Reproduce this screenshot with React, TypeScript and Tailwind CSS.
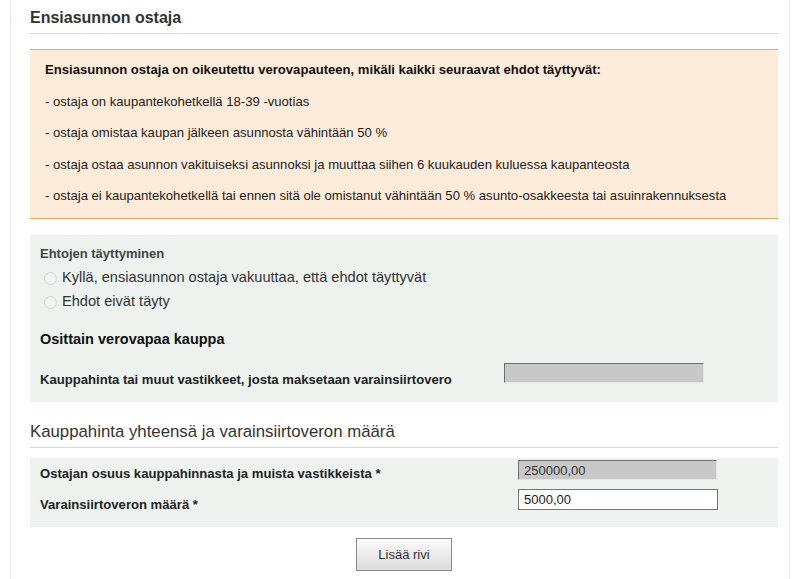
const conditions = [
  "- ostaja on kaupantekohetkellä 18-39 -vuotias",
  "- ostaja omistaa kaupan jälkeen asunnosta vähintään 50 %",
  "- ostaja ostaa asunnon vakituiseksi asunnoksi ja muuttaa siihen 6 kuukauden kuluessa kaupanteosta",
  "- ostaja ei kaupantekohetkellä tai ennen sitä ole omistanut vähintään 50 % asunto-osakkeesta tai asuinrakennuksesta",
];

function Radio({ label }: { label: string }) {
  return (
    <label className="flex items-center gap-[5px] pl-[4px] h-[24px] text-[14.6px] text-[#333]">
      <input
        type="radio"
        name="ehdot"
        disabled
        className="appearance-none w-[13px] h-[13px] rounded-full border border-[#d4d6d4] bg-[#f2f4f2]"
      />
      {label}
    </label>
  );
}

export default function App() {
  return (
    <div className="min-h-[579px] bg-white font-['Liberation_Sans',Arial,sans-serif]">
      <div className="ml-[10px] w-[780px] min-h-[579px] border-l border-r border-[#e3e3e3] pl-[19px] pr-[11px]">
        <h2 className="border-b border-[#d9d9d9] pt-[8px] pb-[5px] text-[16px] leading-[20px] font-bold text-[#333]">
          Ensiasunnon ostaja
        </h2>

        <div className="mt-[15px] border-t border-b border-[#e2a962] bg-[#fdebd9] pl-[15px] pt-[11px] pb-[13px] flex flex-col gap-[13.5px] text-[13.1px] leading-[18px] text-[#222]">
          <p className="font-bold text-[#111]">
            Ensiasunnon ostaja on oikeutettu verovapauteen, mikäli kaikki seuraavat ehdot täyttyvät:
          </p>
          {conditions.map((c) => (
            <p key={c}>{c}</p>
          ))}
        </div>

        <div className="mt-[16px] bg-[#edf2ee] px-[10px] pt-[10px] pb-[13px]">
          <p className="text-[13px] leading-[18px] font-bold text-[#444]">Ehtojen täyttyminen</p>
          <div className="mt-[3px]">
            <Radio label="Kyllä, ensiasunnon ostaja vakuuttaa, että ehdot täyttyvät" />
            <Radio label="Ehdot eivät täyty" />
          </div>
          <p className="mt-[15px] text-[14.5px] leading-[20px] font-bold text-[#111]">
            Osittain verovapaa kauppa
          </p>
          <div className="mt-[14px] flex items-start">
            <span className="w-[464px] pt-[8px] text-[13.1px] leading-[18px] font-bold text-[#222]">
              Kauppahinta tai muut vastikkeet, josta maksetaan varainsiirtovero
            </span>
            <input
              type="text"
              disabled
              className="w-[200px] h-[20px] bg-[#c8c8c8] border border-t-[#6e6e6e] border-l-[#6e6e6e] border-r-[#e4e4e4] border-b-[#e4e4e4]"
            />
          </div>
        </div>

        <h2 className="mt-[20px] border-b border-[#d9d9d9] pb-[5px] text-[16.8px] leading-[20px] font-normal text-[#333]">
          Kauppahinta yhteensä ja varainsiirtoveron määrä
        </h2>

        <div className="mt-[10px] bg-[#edf2ee] px-[10px] pt-[2px] pb-[17px] flex flex-col gap-[9px]">
          <div className="flex items-start h-[20px]">
            <span className="w-[478px] pt-[5px] text-[13.1px] leading-[18px] font-bold text-[#222]">
              Ostajan osuus kauppahinnasta ja muista vastikkeista *
            </span>
            <input
              type="text"
              readOnly
              value="250000,00"
              className="w-[199px] h-[20px] px-[5px] text-[13px] text-[#333] bg-[#c8c8c8] border border-t-[#6e6e6e] border-l-[#6e6e6e] border-r-[#e4e4e4] border-b-[#e4e4e4] outline-none"
            />
          </div>
          <div className="flex items-start h-[21px]">
            <span className="w-[478px] pt-[7px] text-[13.1px] leading-[18px] font-bold text-[#222]">
              Varainsiirtoveron määrä *
            </span>
            <input
              type="text"
              defaultValue="5000,00"
              className="w-[200px] h-[21px] px-[5px] text-[13px] text-[#222] bg-white border border-[#767676] outline-none"
            />
          </div>
        </div>

        <div className="flex justify-center mt-[11px]">
          <button
            type="button"
            className="w-[96px] h-[33px] text-[13px] text-[#333] border border-[#8a8a8a] bg-gradient-to-b from-[#fbfbfb] to-[#dcdcdc] cursor-pointer"
          >
            Lisää rivi
          </button>
        </div>
      </div>
    </div>
  );
}
